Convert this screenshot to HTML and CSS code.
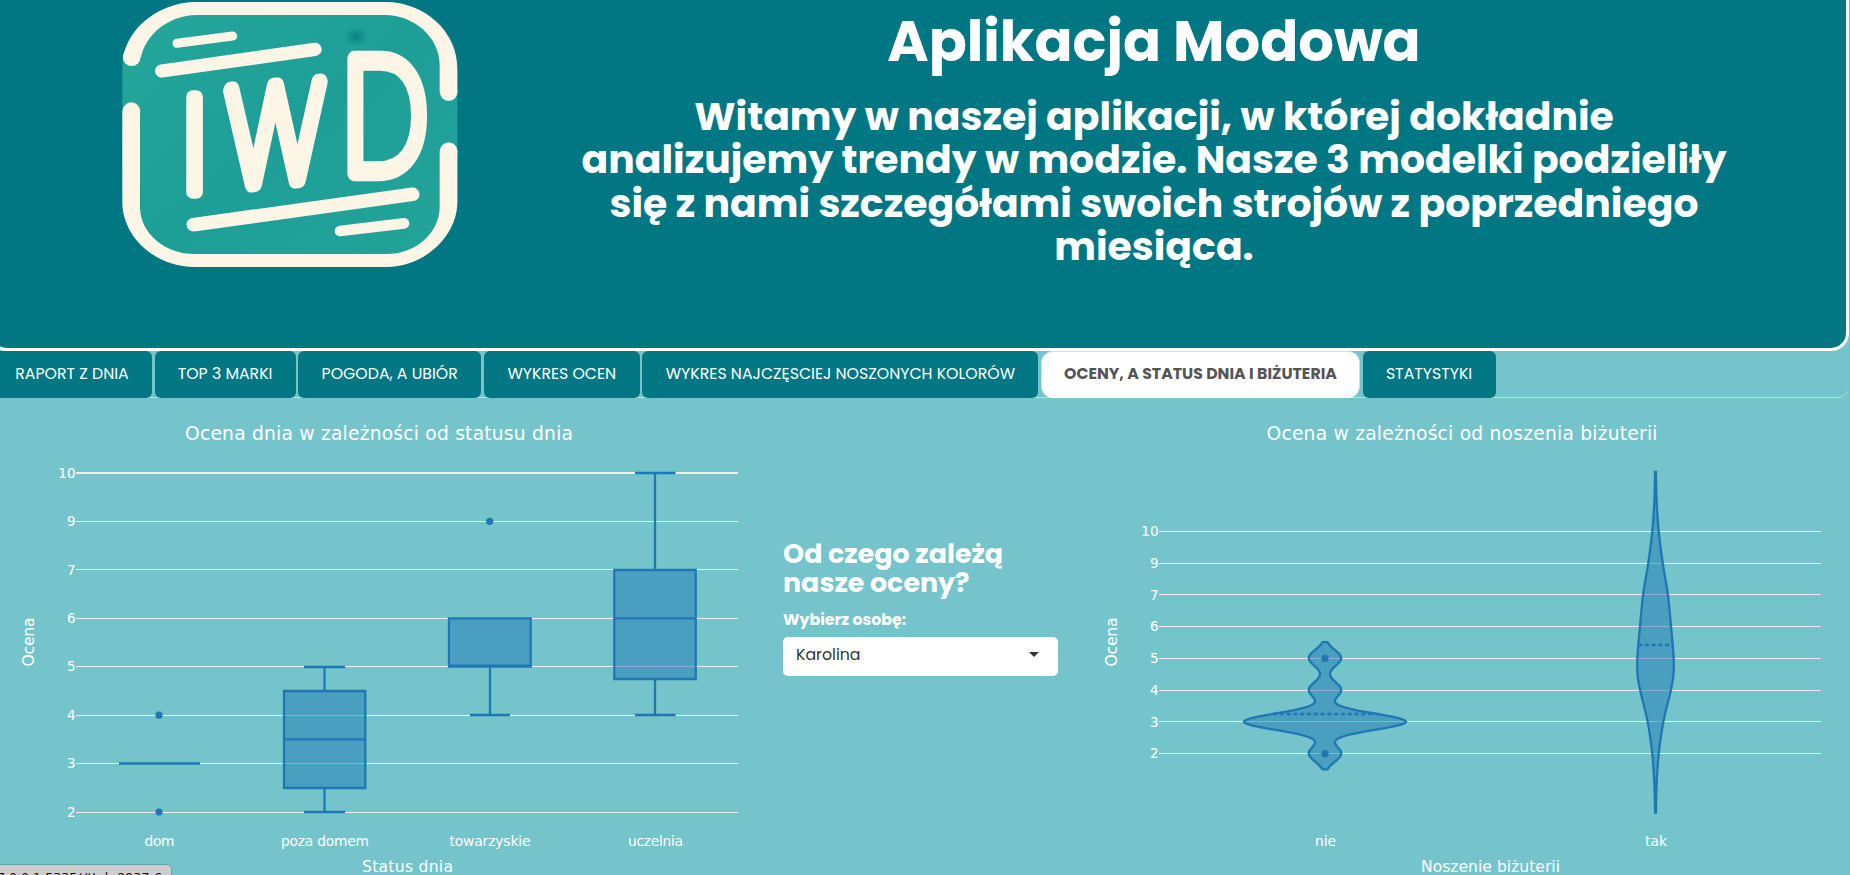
FILE: index.html
```html
<!DOCTYPE html>
<html lang="pl">
<head>
<meta charset="utf-8">
<title>Aplikacja Modowa</title>
<link rel="stylesheet" href="styles.css">
</head>
<body>
<header class="hero">
  <svg class="logo" viewBox="0 0 1140 870" role="img" aria-label="IWD">
    <defs>
      <radialGradient id="spot"><stop offset="0" stop-color="#067f80" stop-opacity=".95"/><stop offset="1" stop-color="#067f80" stop-opacity="0"/></radialGradient>
      <linearGradient id="felt" x1="0" y1="0" x2="1" y2="1"><stop offset="0" stop-color="#25a79c"/><stop offset=".5" stop-color="#1d9e97"/><stop offset="1" stop-color="#23a59b"/></linearGradient>
      <mask id="gaps"><rect width="1140" height="870" fill="#fff"/><rect x="60" y="172" width="70" height="162"/><rect x="1010" y="276" width="70" height="178"/></mask>
    </defs>
    <path d="M290 6H855C975 6 1072 95 1072 205V605C1072 710 970 801 860 801H285C165 801 67 710 67 605V200C67 95 170 6 290 6Z" fill="url(#felt)"/>
    <ellipse cx="768" cy="110" rx="36" ry="28" fill="url(#spot)"/>
    <g fill="#fdf5e6">
      <path mask="url(#gaps)" fill-rule="evenodd" d="M290 6H855C975 6 1072 95 1072 205V605C1072 710 970 801 860 801H285C165 801 67 710 67 605V200C67 95 170 6 290 6ZM290 45C205 45 120 110 120 200V620C120 700 195 762 285 762H860C945 762 1019 700 1019 620V195C1019 110 940 45 855 45Z"/>
      <ellipse cx="95" cy="172" rx="26.500" ry="26"/><ellipse cx="94" cy="334" rx="26.500" ry="27"/>
      <ellipse cx="1046" cy="276" rx="26.500" ry="27"/><ellipse cx="1046" cy="454" rx="26.500" ry="27"/>
    </g>
    <g stroke="#fdf5e6" stroke-linecap="round">
      <path d="M231 130L398 108" stroke-width="27"/><path d="M185 213L645 148" stroke-width="40"/>
      <path d="M280 674L938 583" stroke-width="41"/><path d="M720 693L912 670" stroke-width="32"/>
    </g>
    <g class="mark">
      <text x="284" y="576" text-anchor="middle">I</text>
      <text class="wide" transform="matrix(.8 -.072 0 1 380 558)">W</text>
      <text transform="matrix(.96 0 0 1.200 719 518)">D</text>
    </g>
  </svg>
  <div class="intro">
    <h1>Aplikacja Modowa</h1>
    <h3>Witamy w naszej aplikacji, w której dokładnie<br>
    analizujemy trendy w modzie. Nasze 3 modelki podzieliły<br>
    się z nami szczegółami swoich strojów z poprzedniego<br>
    miesiąca.</h3>
  </div>
</header>
<nav class="tabs">
  <a class="tab t1">RAPORT Z DNIA</a>
  <a class="tab t2">TOP 3 MARKI</a>
  <a class="tab t3">POGODA, A UBIÓR</a>
  <a class="tab t4">WYKRES OCEN</a>
  <a class="tab t5">WYKRES NAJCZĘSCIEJ NOSZONYCH KOLORÓW</a>
  <a class="tab t6 active">OCENY, A STATUS DNIA I BIŻUTERIA</a>
  <a class="tab t7">STATYSTYKI</a>
</nav>
<main class="panel">
  <svg class="chart" width="765" height="477" viewBox="0 398 765 477">
    <text class="title" x="379" y="439.500" textLength="388">Ocena dnia w zależności od statusu dnia</text>
    <text class="axis" transform="translate(34 642) rotate(-90)" textLength="49">Ocena</text>
    <g class="grid"><path d="M76 473H738" stroke-width="2"/><path d="M76 521.500H738M76 569.500H738M76 618.500H738M76 666.500H738M76 715.500H738M76 763.500H738M76 812.500H738"/></g>
    <g class="tick"><text x="75.500" y="478">10</text><text x="75.500" y="526">9</text><text x="75.500" y="575">7</text><text x="75.500" y="623">6</text><text x="75.500" y="671">5</text><text x="75.500" y="720">4</text><text x="75.500" y="768">3</text><text x="75.500" y="817">2</text></g>
    <g class="shape">
      <path d="M119 763.500H200"/>
      <path d="M284 691H365.300V788H284ZM284 739.300H365.300M324.500 691V667M304 667H345M324.500 788V812M304 812H345"/>
      <path d="M449 618.300H530.700V666.500H449ZM449 665.700H530.700M490 667V715M470 715H510"/>
      <path d="M614.300 570H695.700V679H614.300ZM614.300 618.300H695.700M655 570V473M635 473H675.500M655 679V715M635 715H675.500"/>
    </g>
    <g class="dot"><circle cx="159" cy="715.200" r="3.600"/><circle cx="159" cy="812" r="3.600"/><circle cx="489.700" cy="521.300" r="3.600"/></g>
    <g class="cat"><text x="159.500" y="845.500" textLength="30">dom</text><text x="325" y="845.500" textLength="88">poza domem</text><text x="490" y="845.500" textLength="81">towarzyskie</text><text x="655.500" y="845.500" textLength="55">uczelnia</text></g>
    <text class="axis" x="407.500" y="871.500" textLength="91">Status dnia</text>
  </svg>
  <form class="picker">
    <h4>Od czego zależą<br>nasze oceny?</h4>
    <label>Wybierz osobę:</label>
    <div class="select"><span>Karolina</span><i class="caret"></i></div>
  </form>
  <svg class="chart" width="767" height="477" viewBox="1083 398 767 477">
    <text class="title" x="1462" y="439.500" textLength="391">Ocena w zależności od noszenia biżuterii</text>
    <text class="axis" transform="translate(1117 642) rotate(-90)" textLength="49">Ocena</text>
    <g class="grid"><path d="M1159 531.500H1821M1159 563.500H1821M1159 594.500H1821M1159 626.500H1821M1159 658.500H1821M1159 690.500H1821M1159 721.500H1821M1159 753.500H1821"/></g>
    <g class="tick"><text x="1158.500" y="536">10</text><text x="1158.500" y="568">9</text><text x="1158.500" y="600">7</text><text x="1158.500" y="631">6</text><text x="1158.500" y="663">5</text><text x="1158.500" y="695">4</text><text x="1158.500" y="727">3</text><text x="1158.500" y="758">2</text></g>
    <g class="shape">
      <path id="nie"/><path id="tak"/>
      <path class="mean" d="M1273 714H1377M1638 645H1673.500"/>
    </g>
    <g class="dot"><circle cx="1325" cy="658.400" r="3.600"/><circle cx="1325" cy="753.700" r="3.600"/></g>
    <g class="cat"><text x="1325.500" y="845.500" textLength="21">nie</text><text x="1656" y="845.500" textLength="22">tak</text></g>
    <text class="axis" x="1490.500" y="871.500" textLength="139">Noszenie biżuterii</text>
  </svg>
</main>
<div class="status">7.0.0.1:5335/#tab-2937-6</div>
<script src="charts.js"></script>
</body>
</html>
```
FILE: styles.css
```css
* { box-sizing: border-box; }
body { margin: 0; height: 875px; overflow: hidden; background: #75c4cb; color: #fff; font-family: Poppins, Inter, sans-serif; position: relative; }
.hero { display: flex; align-items: flex-start; margin-left: -11px; width: 1860px; height: 351px; background: #007782; border: 3px solid #fff; border-top: 0; border-radius: 0 0 18px 18px; }
.logo { width: 380px; height: 290px; margin-left: 108px; flex: none; }
.mark { fill: #fdf5e6; stroke: #fdf5e6; stroke-width: 41px; stroke-linejoin: round; font: 100 393px Inter, sans-serif; }
.wide { stroke-width: 52px; }
.intro { margin-left: 74px; width: 1200px; text-align: center; white-space: nowrap; }
h1, h3, h4 { margin: 0; font-weight: 700; }
h1 { font-size: 56.1px; line-height: 62px; padding-top: 11px; }
h3 { font-size: 39.37px; line-height: 43.34px; padding-top: 22px; }
.tabs { display: flex; width: 1848px; height: 47px; gap: 2.6px; border-bottom: 1px solid #c5dcde; border-radius: 0 0 10px 0; }
.tab { display: flex; align-items: center; justify-content: center; height: 47px; background: #007782; border-radius: 6px; font-size: 15.75px; white-space: nowrap; padding-bottom: 3px; flex: none; }
.t1 { width: 162px; margin-left: -10px; padding-left: 2px; }
.t2 { width: 141px; }
.t3 { width: 183px; }
.t4 { width: 156px; }
.t5 { width: 396px; }
.t6 { width: 319px; }
.t7 { width: 133px; }
.active { background: #fff; color: #555; font-weight: 700; border: 1px solid #d5dfe0; border-bottom: 0; border-radius: 12px; }
.panel { display: flex; height: 477px; }
.chart { flex: none; display: block; font-family: Verdana, "DejaVu Sans", sans-serif; fill: #fff; }
.title { font-size: 18.7px; text-anchor: middle; }
.axis { font-size: 15.6px; text-anchor: middle; }
.tick { font-size: 13.5px; text-anchor: end; }
.cat { font-size: 13.8px; text-anchor: middle; }
.grid { stroke: #eee; fill: none; }
.shape { stroke: #1f77b4; stroke-width: 2.3px; fill: #1f77b4; fill-opacity: .5; }
.dot { fill: #1f77b4; }
.mean { stroke-dasharray: 4 2.800; }
.picker { width: 318px; padding: 141px 25px 0 18px; white-space: nowrap; }
h4 { font-size: 26.9px; line-height: 29px; }
label { display: block; margin-top: 11px; font-size: 15.75px; line-height: 24px; font-weight: 700; }
.select { display: flex; align-items: center; justify-content: space-between; margin-top: 5px; height: 39px; padding: 0 19px 4px 13px; background: #fff; color: #333; border-radius: 5px; font-size: 15.75px; }
.caret { border: 5px solid transparent; border-top-color: #333; border-bottom: 0; }
.status { position: absolute; left: 0; bottom: 0; width: 172px; height: 11px; overflow: hidden; padding-top: 6px; background: #cdcdcd; border: 1px solid #62a5ab; border-left: 0; border-bottom: 0; border-top-right-radius: 5px; color: #111; font: 12.6px/14px "DejaVu Sans", sans-serif; text-indent: -3px; white-space: nowrap; }
```
FILE: charts.js
```js
// Outline symmetric about cx, from [y, halfWidth] pairs.
function outline(cx, pts) {
  const right = pts.map(([y, w]) => `${(cx + w).toFixed(2)} ${y.toFixed(2)}`);
  const left = pts.slice().reverse().map(([y, w]) => `${(cx - w).toFixed(2)} ${y.toFixed(2)}`);
  return 'M' + right.concat(left).join('L') + 'Z';
}
const samples = [[2, 1], [3, 5], [4, 1], [5, 1]];
const nie = [];
for (let v = 5.5; v > 1.49; v -= 0.05) {
  const d = samples.reduce((s, [m, n]) => s + n * Math.exp(-((v - m) ** 2) / 0.134), 0);
  nie.push([721.7 - (v - 3) * 31.8, d * 16.2]);
}
document.getElementById('nie').setAttribute('d', outline(1325, nie));

const knots = [[472, .4], [500, 1.1], [531, 3.2], [563, 7.2], [594, 12.3], [626, 15.5], [645, 17.2], [663, 18.3], [676, 17.8], [690, 15.4], [721, 8], [753, 3.3], [785, 1.1], [812.5, .4]];
const tak = [];
for (let i = 0; i < knots.length - 1; i++) {
  const p = [knots[Math.max(0, i - 1)], knots[i], knots[i + 1], knots[Math.min(knots.length - 1, i + 2)]];
  const h = p[2][0] - p[1][0];
  const m1 = (p[2][1] - p[0][1]) / (p[2][0] - p[0][0]) * h;
  const m2 = (p[3][1] - p[1][1]) / (p[3][0] - p[1][0]) * h;
  for (let t = 0; t < 1; t += 0.125) {
    const w = (2*t**3 - 3*t*t + 1) * p[1][1] + (t**3 - 2*t*t + t) * m1 + (3*t*t - 2*t**3) * p[2][1] + (t**3 - t*t) * m2;
    tak.push([p[1][0] + t * h, w]);
  }
}
tak.push(knots[knots.length - 1]);
document.getElementById('tak').setAttribute('d', outline(1655.5, tak));
```
